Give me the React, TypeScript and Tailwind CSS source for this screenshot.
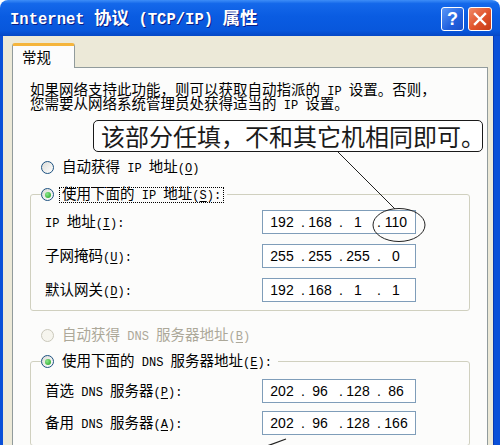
import React from "react";

const LAT = "font-['Liberation_Mono',monospace]";

function Tx({ s, lat = "text-[0.83em]" }: { s: string; lat?: string }) {
  const segs = s.split(/&(.)/);
  const out: React.ReactNode[] = [];
  segs.forEach((seg, i) => {
    if (i % 2 === 1) {
      out.push(
        <span key={`m${i}`} className={`${LAT} ${lat} underline underline-offset-[2px]`}>
          {seg}
        </span>
      );
      return;
    }
    const runs = seg.match(/[\x20-\x7e]+|[^\x20-\x7e]+/g) || [];
    runs.forEach((r, j) => {
      if (/^[\x20-\x7e]+$/.test(r))
        out.push(
          <span key={`${i}-${j}`} className={`${LAT} ${lat} whitespace-pre`}>
            {r}
          </span>
        );
      else out.push(<React.Fragment key={`${i}-${j}`}>{r}</React.Fragment>);
    });
  });
  return <>{out}</>;
}

function Radio({ checked = false, disabled = false }: { checked?: boolean; disabled?: boolean }) {
  return (
    <span
      className={
        disabled
          ? "flex items-center justify-center w-[13px] h-[13px] shrink-0 rounded-full border border-[#CAC8BB] bg-[#F6F5EE]"
          : "flex items-center justify-center w-[13px] h-[13px] shrink-0 rounded-full border border-[#1C5180] bg-[linear-gradient(135deg,#DCDCD7,#FFFFFF)]"
      }
    >
      {checked && (
        <span className="w-[6px] h-[6px] rounded-full bg-[radial-gradient(circle_at_35%_35%,#8BE88B,#1E9E1E)]" />
      )}
    </span>
  );
}

function RadioRow({
  s,
  checked,
  disabled,
  focus,
}: {
  s: string;
  checked?: boolean;
  disabled?: boolean;
  focus?: boolean;
}) {
  return (
    <div className="flex items-center h-[17px]">
      <Radio checked={checked} disabled={disabled} />
      <span
        className={
          (focus ? "border-black " : "border-transparent ") +
          (disabled ? "text-[#ACA899] " : "text-black ") +
          "ml-[5px] border border-dotted px-[2px] h-[16px] flex items-center leading-[14px] whitespace-nowrap"
        }
      >
        <span>
          <Tx s={s} />
        </span>
      </span>
    </div>
  );
}

function IpField({ v }: { v: string[] }) {
  return (
    <div className="w-[154px] h-[24px] border border-[#7F9DB9] bg-white flex items-center pl-[4px] font-['Liberation_Sans',Arial,sans-serif] text-[14px] text-black">
      <span className="w-[30px] text-center">{v[0]}</span>
      <span className="w-[8px] text-right">.</span>
      <span className="w-[30px] text-center">{v[1]}</span>
      <span className="w-[8px] text-right">.</span>
      <span className="w-[30px] text-center">{v[2]}</span>
      <span className="w-[8px] text-right">.</span>
      <span className="w-[30px] text-center">{v[3]}</span>
    </div>
  );
}

function FieldRow({ label, v }: { label: string; v: string[] }) {
  return (
    <div className="flex items-center h-[24px]">
      <span className="w-[217px] whitespace-nowrap">
        <Tx s={label} />
      </span>
      <IpField v={v} />
    </div>
  );
}

export default function App() {
  return (
    <div className="relative w-[500px] h-[445px] overflow-hidden bg-white font-['Noto_Sans_CJK_SC',sans-serif] text-black">
      <div className="flex flex-col h-full rounded-t-[8px] overflow-hidden">
        {/* Title bar */}
        <div className="h-[36px] shrink-0 flex items-center pl-[10px] pr-[8px] bg-[linear-gradient(to_bottom,#3D8DF7_0%,#1468EA_10%,#0A5CE2_45%,#0857DC_85%,#0648C6_100%)]">
          <div className="flex-1 pt-[1px] text-white font-bold text-[17.5px] leading-[20px] whitespace-nowrap [text-shadow:1px_1px_#0A1D87]">
            <Tx s="Internet 协议 (TCP/IP) 属性" lat="text-[0.89em]" />
          </div>
          <div className="flex gap-[4px] mt-[2px]">
            <div className="w-[23px] h-[24px] rounded-[3px] border border-white bg-[linear-gradient(135deg,#5A98F8,#2160DE_60%,#1A50C8)] flex items-center justify-center text-white font-bold font-['Liberation_Sans',Arial,sans-serif] text-[18px] leading-none">
              ?
            </div>
            <div className="w-[24px] h-[24px] rounded-[3px] border border-white bg-[linear-gradient(135deg,#F08A68,#E0522A_55%,#C43C18)] flex items-center justify-center">
              <svg width="14" height="14" viewBox="0 0 14 14">
                <path d="M2 2 L12 12 M12 2 L2 12" stroke="white" strokeWidth="2.4" strokeLinecap="square" />
              </svg>
            </div>
          </div>
        </div>

        {/* Body */}
        <div className="flex-1 flex min-h-0">
          <div className="w-[3px] bg-[#0A50D8]" />
          <div className="flex-1 bg-[#ECE9D8] pl-[9px] pr-[5px] pt-[7px] flex flex-col min-h-0">
            {/* Tabs */}
            <div className="flex">
              <div className="relative z-10 -mb-px w-[63px] h-[25px] border border-b-0 border-[#919B9C] border-t-[3px] border-t-[#F5B53C] rounded-t-[3px] bg-[#FCFCFC] flex items-center pl-[9px] pb-[1px] text-[14.5px] leading-[16px]">
                常规
              </div>
            </div>
            {/* Panel */}
            <div className="flex-1 border border-[#919B9C] bg-[#FCFCFB] pl-[17px] pt-[14px] text-[14.5px]">
              <div className="flex flex-col whitespace-nowrap">
                <div className="h-[14.5px] flex items-center">
                  <span>
                    <Tx s="如果网络支持此功能，则可以获取自动指派的 IP 设置。否则，" />
                  </span>
                </div>
                <div className="h-[14.5px] flex items-center">
                  <span>
                    <Tx s="您需要从网络系统管理员处获得适当的 IP 设置。" />
                  </span>
                </div>
              </div>

              <div className="mt-[9px] ml-[63px] w-[390px] h-[32px] border border-[#1A1A1A] rounded-[5px] bg-white pl-[7px] flex items-center text-[24px] text-[#1A1A1A] whitespace-nowrap">
                该部分任填，不和其它机相同即可。
              </div>

              <div className="mt-[7px] ml-[11px]">
                <RadioRow s="自动获得 IP 地址(&O)" />
              </div>

              <fieldset className="mt-[10px] w-[440px] border border-[#D0D0BF] rounded-[3px] p-0 m-0">
                <legend className="ml-[10px] pr-[3px] p-0">
                  <RadioRow s="使用下面的 IP 地址(&S):" checked focus />
                </legend>
                <div className="pl-[14px] pt-[7px] pb-[8px] flex flex-col gap-[10px]">
                  <FieldRow label="IP 地址(&I):" v={["192", "168", "1", "110"]} />
                  <FieldRow label="子网掩码(&U):" v={["255", "255", "255", "0"]} />
                  <FieldRow label="默认网关(&D):" v={["192", "168", "1", "1"]} />
                </div>
              </fieldset>

              <div className="mt-[16px] ml-[11px]">
                <RadioRow s="自动获得 DNS 服务器地址(&B)" disabled />
              </div>

              <fieldset className="mt-[9px] w-[440px] border border-[#D0D0BF] rounded-[3px] p-0 m-0">
                <legend className="ml-[10px] pr-[3px] p-0">
                  <RadioRow s="使用下面的 DNS 服务器地址(&E):" checked />
                </legend>
                <div className="pl-[14px] pt-[9px] pb-[10px] flex flex-col gap-[8px]">
                  <FieldRow label="首选 DNS 服务器(&P):" v={["202", "96", "128", "86"]} />
                  <FieldRow label="备用 DNS 服务器(&A):" v={["202", "96", "128", "166"]} />
                </div>
              </fieldset>
            </div>
          </div>
          <div className="w-[7px] bg-[#0A50D8] border-l border-[#0839B0]" />
        </div>
      </div>

      {/* Hand-drawn annotation overlay */}
      <svg className="absolute inset-0 pointer-events-none" width="500" height="445" viewBox="0 0 500 445">
        <line x1="338" y1="152" x2="395" y2="209" stroke="#222" strokeWidth="1" />
        <ellipse cx="399" cy="225" rx="26" ry="16.5" fill="none" stroke="#222" strokeWidth="1" />
        <line x1="267" y1="446" x2="286" y2="439" stroke="#222" strokeWidth="1.3" />
      </svg>
    </div>
  );
}
